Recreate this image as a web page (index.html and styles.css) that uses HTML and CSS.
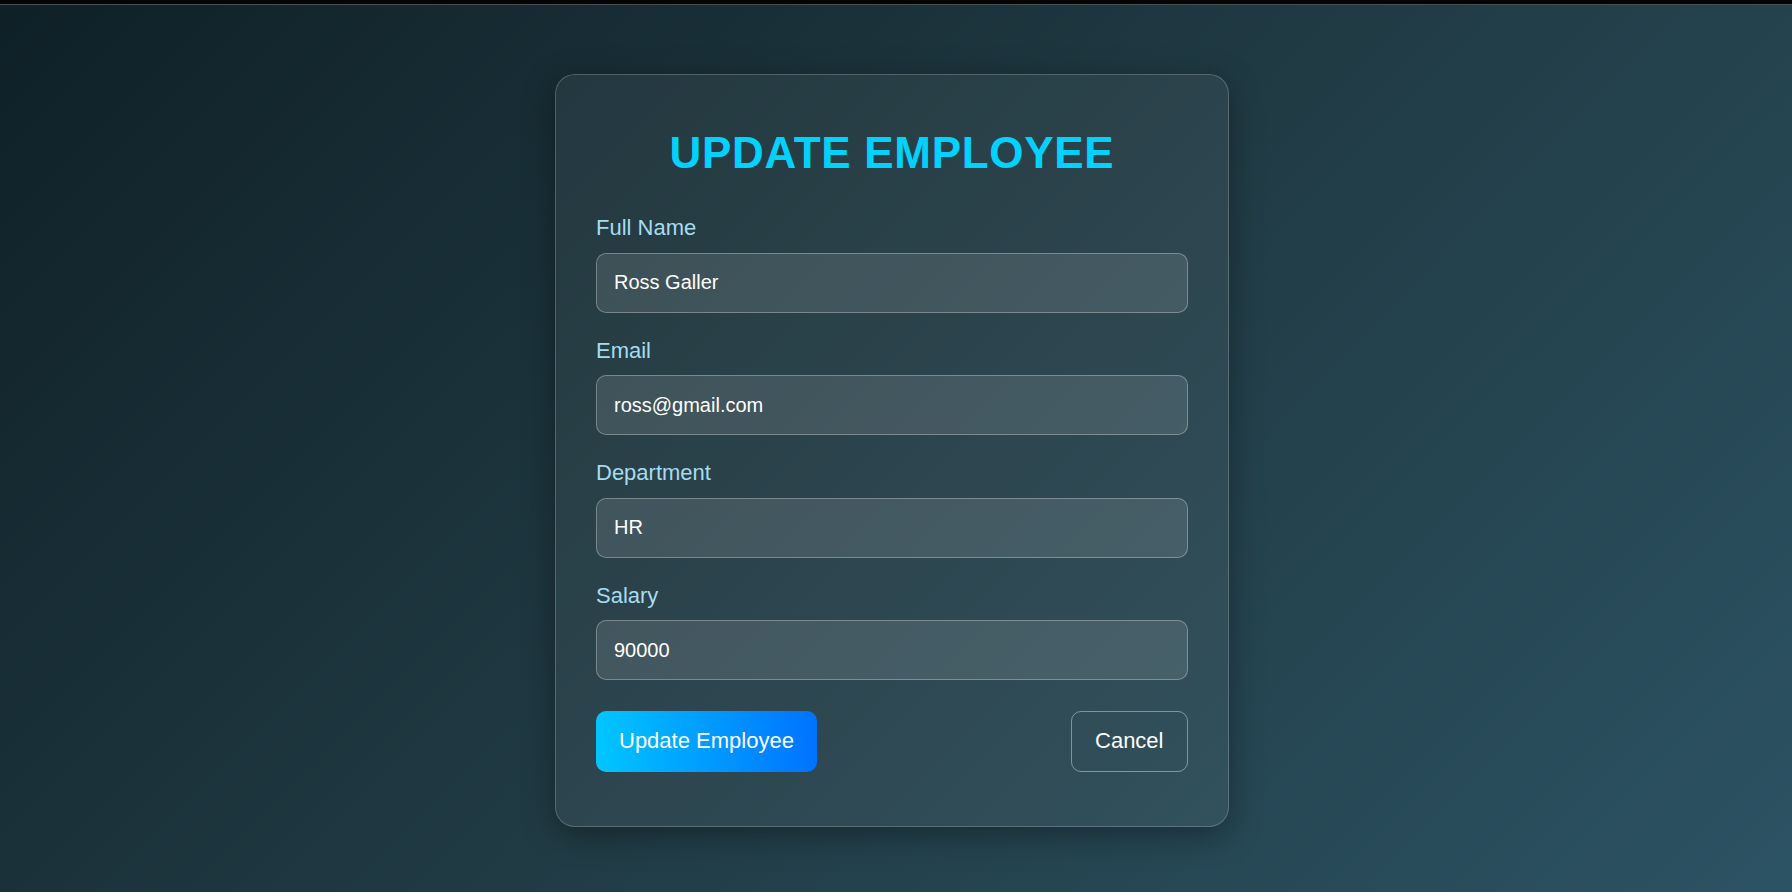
FILE: index.html
```html
<!DOCTYPE html>
<html lang="en">
<head>
<meta charset="utf-8">
<title>Update Employee</title>
<link rel="stylesheet" href="styles.css">
</head>
<body>
<div class="topbar"></div>
<main class="page">
  <form class="card">
    <h2 class="title">UPDATE EMPLOYEE</h2>
    <div class="field">
      <label class="label" for="name">Full Name</label>
      <input class="input" id="name" type="text" value="Ross Galler">
    </div>
    <div class="field">
      <label class="label" for="email">Email</label>
      <input class="input" id="email" type="text" value="ross@gmail.com">
    </div>
    <div class="field">
      <label class="label" for="dept">Department</label>
      <input class="input" id="dept" type="text" value="HR">
    </div>
    <div class="field">
      <label class="label" for="salary">Salary</label>
      <input class="input" id="salary" type="text" value="90000">
    </div>
    <div class="actions">
      <button class="btn btn-primary" type="button">Update Employee</button>
      <button class="btn btn-cancel" type="button">Cancel</button>
    </div>
  </form>
</main>
</body>
</html>
```

FILE: styles.css
```css
* { box-sizing: border-box; }
html, body {
  margin: 0;
  padding: 0;
  height: 100%;
}
body {
  font-family: "Liberation Sans", Arial, sans-serif;
  background: linear-gradient(135deg, #0f2027 0%, #203a43 50%, #2c5364 100%);
  background-attachment: fixed;
  min-height: 892px;
  overflow: hidden;
}
.topbar {
  height: 5px;
  background: #050505;
  border-bottom: 1px solid #4a4f52;
}
.page {
  display: flex;
  justify-content: center;
  padding-top: 69px;
  padding-right: 8px;
}
.card {
  display: flex;
  flex-direction: column;
  width: 674px;
  padding: 40px;
  background: rgba(255, 255, 255, 0.055);
  border: 1px solid rgba(255, 255, 255, 0.2);
  border-radius: 20px;
  box-shadow: 0 8px 32px rgba(0, 0, 0, 0.35);
}
.title {
  margin: 12px 0 36px;
  text-align: center;
  font-size: 44px;
  line-height: 52px;
  font-weight: 700;
  color: #00d2ff;
  letter-spacing: 0.7px;
}
.field {
  display: flex;
  flex-direction: column;
  margin-bottom: 25px;
}
.label {
  font-size: 22px;
  line-height: 25px;
  color: #a6dcf0;
  margin-bottom: 12.5px;
}
.input {
  height: 60px;
  padding: 0 17px;
  font-family: "Liberation Sans", Arial, sans-serif;
  font-size: 20px;
  color: #ffffff;
  background: rgba(255, 255, 255, 0.11);
  border: 1px solid rgba(255, 255, 255, 0.3);
  border-radius: 10px;
  outline: none;
}
.actions {
  display: flex;
  justify-content: space-between;
  margin: 6px 0 14px;
}
.btn {
  height: 60.5px;
  font-family: "Liberation Sans", Arial, sans-serif;
  font-size: 22px;
  color: #ffffff;
  border-radius: 10px;
  cursor: pointer;
}
.btn-primary {
  padding: 0 23px;
  border: none;
  background: linear-gradient(90deg, #00c6ff, #0072ff);
}
.btn-cancel {
  padding: 0 23.5px;
  background: transparent;
  border: 1px solid rgba(255, 255, 255, 0.4);
}
```
